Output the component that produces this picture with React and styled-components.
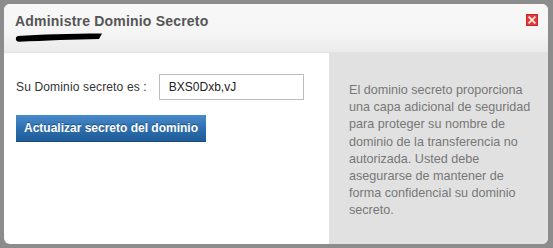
import React from 'react';
import styled, { createGlobalStyle } from 'styled-components';

const GlobalStyle = createGlobalStyle`
  html, body {
    margin: 0;
    padding: 0;
    background: #8c8c8c;
  }
  body {
    font-family: "Liberation Sans", Arial, sans-serif;
  }
`;

const helpLines = [
    'El dominio secreto proporciona',
    'una capa adicional de seguridad',
    'para proteger su nombre de',
    'dominio de la transferencia no',
    'autorizada. Usted debe',
    'asegurarse de mantener de',
    'forma confidencial su dominio',
    'secreto.',
];

const App = () => {
    return (
        <Page>
            <GlobalStyle />
            <Dialog>
                <Header>
                    <TitleBlock>
                        <Title>Administre Dominio Secreto</Title>
                        <Redacted viewBox="0 0 88 9" width="88" height="9">
                            <path d="M3 3 C25 1.5 55 0.5 87 0.5 L84 6 C60 6.5 30 7.5 4 8.8 C0 8.8 0 3.5 3 3 Z" fill="#000" />
                        </Redacted>
                    </TitleBlock>
                    <CloseButton aria-label="Cerrar">
                        <svg viewBox="0 0 12 12" width="12" height="12">
                            <rect x="0.5" y="0.5" width="11" height="11" fill="#e23b3f" stroke="#c9252b" />
                            <path d="M3.2 3.2 L8.8 8.8 M8.8 3.2 L3.2 8.8" stroke="#fbe9d8" strokeWidth="1.8" strokeLinecap="square" />
                        </svg>
                    </CloseButton>
                </Header>
                <Body>
                    <MainPanel>
                        <FieldRow>
                            <Label>Su Dominio secreto es :</Label>
                            <SecretInput readOnly value="BXS0Dxb,vJ" />
                        </FieldRow>
                        <UpdateButton>Actualizar secreto del dominio</UpdateButton>
                    </MainPanel>
                    <SidePanel>
                        <HelpText>
                            {helpLines.map((line) => (
                                <HelpLine key={line}>{line}</HelpLine>
                            ))}
                        </HelpText>
                    </SidePanel>
                </Body>
            </Dialog>
        </Page>
    );
};

export default App;

const Page = styled.div`
  padding: 4px 5px 4px 4px;
  width: 553px;
  height: 248px;
  box-sizing: border-box;
`;

const Dialog = styled.div`
  width: 544px;
  height: 240px;
  display: flex;
  flex-direction: column;
  background: #fff;
  border-radius: 6px;
  overflow: hidden;
`;

const Header = styled.div`
  height: 49px;
  box-sizing: border-box;
  display: flex;
  justify-content: space-between;
  align-items: flex-start;
  padding: 9px 10px 0 11px;
  background: linear-gradient(to bottom, #f8f8f8 0%, #f5f5f5 60%, #ebebeb 100%);
  border-bottom: 1px solid #e2e2e2;
`;

const TitleBlock = styled.div`
  display: flex;
  flex-direction: column;
`;

const Title = styled.h1`
  margin: 0;
  font-size: 14px;
  line-height: 17px;
  font-weight: bold;
  color: #555;
  letter-spacing: 0.2px;
`;

const Redacted = styled.svg`
  display: block;
  margin-top: 3px;
`;

const CloseButton = styled.button`
  border: 0;
  padding: 0;
  margin: 1px 0 0 0;
  background: none;
  width: 12px;
  height: 12px;
  cursor: pointer;
  svg {
    display: block;
  }
`;

const Body = styled.div`
  flex: 1;
  display: flex;
`;

const MainPanel = styled.div`
  width: 325px;
  box-sizing: border-box;
  padding: 21px 12px 0 12px;
  display: flex;
  flex-direction: column;
  align-items: flex-start;
  gap: 15px;
`;

const FieldRow = styled.div`
  display: flex;
  align-items: center;
  gap: 12px;
`;

const Label = styled.label`
  font-size: 12px;
  letter-spacing: 0.15px;
  color: #333;
`;

const SecretInput = styled.input`
  width: 145px;
  height: 26px;
  box-sizing: border-box;
  border: 1px solid #bdbdbd;
  padding: 0 9px;
  font-family: "Liberation Sans", Arial, sans-serif;
  font-size: 12px;
  color: #222;
  outline: none;
`;

const UpdateButton = styled.button`
  width: 190px;
  height: 27px;
  border: 0;
  padding: 0;
  background: linear-gradient(to bottom, #4a8ccb 0%, #2d6fb0 50%, #1f5c98 100%);
  border-bottom: 1px solid #174a7c;
  font-family: "Liberation Sans", Arial, sans-serif;
  font-size: 12px;
  font-weight: bold;
  color: #fff;
  text-shadow: 0 -1px 0 rgba(0, 0, 0, 0.35);
  cursor: pointer;
`;

const SidePanel = styled.div`
  flex: 1;
  background: #e1e1e1;
  padding: 29px 14px 0 20px;
`;

const HelpText = styled.p`
  margin: 0;
  font-size: 12.6px;
  line-height: 17.2px;
  color: #777;
`;

const HelpLine = styled.span`
  display: block;
  white-space: nowrap;
`;
